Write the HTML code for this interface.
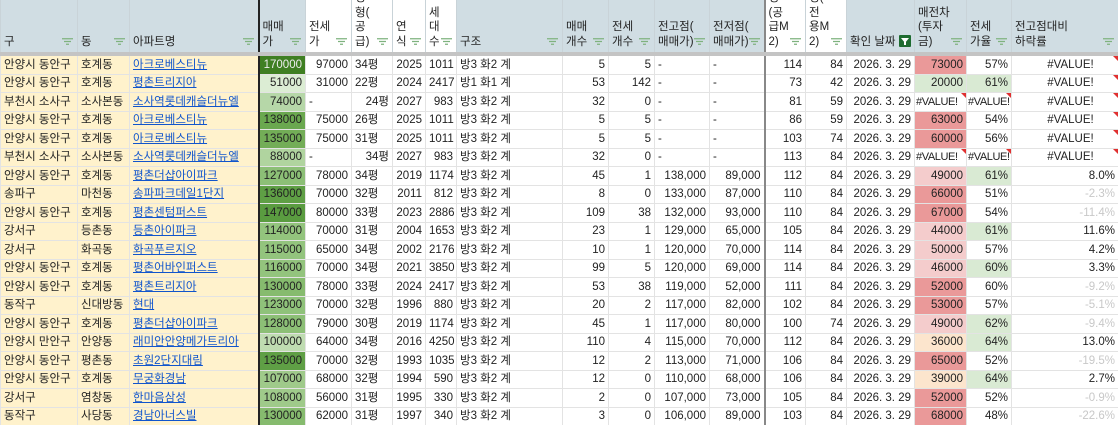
<!DOCTYPE html>
<html><head><meta charset="utf-8">
<style>
html,body{margin:0;padding:0;background:#fff;width:1118px;height:425px;overflow:hidden}
table{border-collapse:collapse;table-layout:fixed;width:1118px;font-family:"Liberation Sans","Noto Sans CJK KR",sans-serif;font-size:11.5px;color:#222}
td{border:1px solid #e3e3e3;height:17.5px;padding:0 3px;white-space:nowrap;overflow:hidden;line-height:16px;position:relative}
thead td{height:auto;vertical-align:bottom;background:#d0dde3;border-bottom:4px solid #c4c4c4;line-height:14.5px;padding:0 3px;white-space:normal;border-color:#c9d3d8;border-bottom-color:#c4c4c4;border-top:0}
thead td>div{height:52px;overflow:hidden;display:flex;flex-direction:column;justify-content:flex-end;padding-bottom:3px;box-sizing:border-box}
thead td.w{background:#fff}
thead td svg{position:absolute;right:4px;bottom:7px}
.y{background:#fff2cc}
.r{text-align:right}
.c{text-align:center;padding-left:14px}
a{color:#1155cc;text-decoration:underline}
.L{border-left:2px solid #222}
.M{border-left:2px solid #888}
.g1{background:#d9ead3}
.p1{background:#ea9999}.p2{background:#f4cccc}.o{background:#fce5cd}
.n{color:#c8c8c8}
.v{font-size:11px;letter-spacing:-0.4px;padding:0 1px}
.t:after{content:"";position:absolute;right:0;top:0;border-top:5px solid #e03030;border-left:5px solid transparent}
.f{position:absolute;right:3px;bottom:5px;width:12px;height:12px;background:#1e6b30;border-radius:1px}
.f:after{content:"";position:absolute;left:2px;top:3px;border-top:5px solid #fff;border-left:4px solid transparent;border-right:4px solid transparent}
.f:before{content:"";position:absolute;left:5px;top:7px;width:2px;height:3px;background:#fff}
</style></head><body>
<svg width="0" height="0" style="position:absolute"><defs><g id="fi"><path d="M0 0.75H11M2 3.5H9M4 6.25H7" stroke="#7fb27f" stroke-width="1.3"/></g></defs></svg>
<table>
<colgroup><col style="width:77px"><col style="width:52px"><col style="width:129px"><col style="width:47px"><col style="width:46px"><col style="width:41px"><col style="width:33px"><col style="width:31px"><col style="width:106px"><col style="width:46px"><col style="width:46px"><col style="width:55px"><col style="width:55px"><col style="width:41px"><col style="width:41px"><col style="width:68px"><col style="width:52px"><col style="width:45px"><col style="width:107px"></colgroup>
<thead><tr>
<td><div>구</div><svg width="11" height="7"><use href="#fi"/></svg></td>
<td><div>동</div><svg width="11" height="7"><use href="#fi"/></svg></td>
<td><div>아파트명</div><svg width="11" height="7"><use href="#fi"/></svg></td>
<td class="L"><div>매매<br>가</div><svg width="11" height="7"><use href="#fi"/></svg></td>
<td class="w"><div>전세<br>가</div><svg width="11" height="7"><use href="#fi"/></svg></td>
<td class="w"><div>평<br>형(<br>공<br>급)</div><svg width="11" height="7"><use href="#fi"/></svg></td>
<td class="w"><div>연<br>식</div><svg width="11" height="7"><use href="#fi"/></svg></td>
<td class="w"><div>세<br>대<br>수</div><svg width="11" height="7"><use href="#fi"/></svg></td>
<td><div>구조</div><svg width="11" height="7"><use href="#fi"/></svg></td>
<td><div>매매<br>개수</div><svg width="11" height="7"><use href="#fi"/></svg></td>
<td><div>전세<br>개수</div><svg width="11" height="7"><use href="#fi"/></svg></td>
<td><div>전고점(<br>매매가)</div><svg width="11" height="7"><use href="#fi"/></svg></td>
<td><div>전저점(<br>매매가)</div><svg width="11" height="7"><use href="#fi"/></svg></td>
<td class="w M"><div>평<br>(공<br>급M<br>2)</div><svg width="11" height="7"><use href="#fi"/></svg></td>
<td class="w"><div>평(<br>전<br>용M<br>2)</div><svg width="11" height="7"><use href="#fi"/></svg></td>
<td><div>확인 날짜</div><span class="f"></span></td>
<td><div>매전차<br>(투자<br>금)</div><svg width="11" height="7"><use href="#fi"/></svg></td>
<td><div>전세<br>가율</div><svg width="11" height="7"><use href="#fi"/></svg></td>
<td><div>전고점대비<br>하락률</div><svg width="11" height="7"><use href="#fi"/></svg></td>
</tr></thead>
<tbody>
<tr><td class="y">안양시 동안구</td><td class="y">호계동</td><td class="y"><a>아크로베스티뉴</a></td><td class="r L" style="background:#3f7f22;color:#eee">170000</td><td class="r">97000</td><td>34평</td><td class="r">2025</td><td class="r">1011</td><td>방3 화2 계</td><td class="r">5</td><td class="r">5</td><td>-</td><td>-</td><td class="r M">114</td><td class="r">84</td><td class="r">2026. 3. 29</td><td class="r p1">73000</td><td class="r">57%</td><td class="c t">#VALUE!</td></tr>
<tr><td class="y">안양시 동안구</td><td class="y">호계동</td><td class="y"><a>평촌트리지아</a></td><td class="r L" style="background:#dcedd4">51000</td><td class="r">31000</td><td>22평</td><td class="r">2024</td><td class="r">2417</td><td>방1 화1 계</td><td class="r">53</td><td class="r">142</td><td>-</td><td>-</td><td class="r M">73</td><td class="r">42</td><td class="r">2026. 3. 29</td><td class="r g1">20000</td><td class="r g1">61%</td><td class="c t">#VALUE!</td></tr>
<tr><td class="y">부천시 소사구</td><td class="y">소사본동</td><td class="y"><a>소사역롯데캐슬더뉴엘</a></td><td class="r L" style="background:#b6d7a8">74000</td><td>-</td><td class="r">24평</td><td class="r">2027</td><td class="r">983</td><td>방3 화2 계</td><td class="r">32</td><td class="r">0</td><td>-</td><td>-</td><td class="r M">81</td><td class="r">59</td><td class="r">2026. 3. 29</td><td class="t v">#VALUE!</td><td class="t v">#VALUE!</td><td class="c t">#VALUE!</td></tr>
<tr><td class="y">안양시 동안구</td><td class="y">호계동</td><td class="y"><a>아크로베스티뉴</a></td><td class="r L" style="background:#6aa84f">138000</td><td class="r">75000</td><td>26평</td><td class="r">2025</td><td class="r">1011</td><td>방3 화2 계</td><td class="r">5</td><td class="r">5</td><td>-</td><td>-</td><td class="r M">86</td><td class="r">59</td><td class="r">2026. 3. 29</td><td class="r p1">63000</td><td class="r">54%</td><td class="c t">#VALUE!</td></tr>
<tr><td class="y">안양시 동안구</td><td class="y">호계동</td><td class="y"><a>아크로베스티뉴</a></td><td class="r L" style="background:#73ad57">135000</td><td class="r">75000</td><td>31평</td><td class="r">2025</td><td class="r">1011</td><td>방3 화2 계</td><td class="r">5</td><td class="r">5</td><td>-</td><td>-</td><td class="r M">103</td><td class="r">74</td><td class="r">2026. 3. 29</td><td class="r p1">60000</td><td class="r">56%</td><td class="c t">#VALUE!</td></tr>
<tr><td class="y">부천시 소사구</td><td class="y">소사본동</td><td class="y"><a>소사역롯데캐슬더뉴엘</a></td><td class="r L" style="background:#b0d49f">88000</td><td>-</td><td class="r">34평</td><td class="r">2027</td><td class="r">983</td><td>방3 화2 계</td><td class="r">32</td><td class="r">0</td><td>-</td><td>-</td><td class="r M">113</td><td class="r">84</td><td class="r">2026. 3. 29</td><td class="t v">#VALUE!</td><td class="t v">#VALUE!</td><td class="c t">#VALUE!</td></tr>
<tr><td class="y">안양시 동안구</td><td class="y">호계동</td><td class="y"><a>평촌더샵아이파크</a></td><td class="r L" style="background:#8cbf76">127000</td><td class="r">78000</td><td>34평</td><td class="r">2019</td><td class="r">1174</td><td>방3 화2 계</td><td class="r">45</td><td class="r">1</td><td class="r">138,000</td><td class="r">89,000</td><td class="r M">112</td><td class="r">84</td><td class="r">2026. 3. 29</td><td class="r p2">49000</td><td class="r g1">61%</td><td class="r">8.0%</td></tr>
<tr><td class="y">송파구</td><td class="y">마천동</td><td class="y"><a>송파파크데일1단지</a></td><td class="r L" style="background:#5f9f45">136000</td><td class="r">70000</td><td>32평</td><td class="r">2011</td><td class="r">812</td><td>방3 화2 계</td><td class="r">8</td><td class="r">0</td><td class="r">133,000</td><td class="r">87,000</td><td class="r M">110</td><td class="r">84</td><td class="r">2026. 3. 29</td><td class="r p1">66000</td><td class="r">51%</td><td class="r n">-2.3%</td></tr>
<tr><td class="y">안양시 동안구</td><td class="y">호계동</td><td class="y"><a>평촌센텀퍼스트</a></td><td class="r L" style="background:#5a9c40">147000</td><td class="r">80000</td><td>33평</td><td class="r">2023</td><td class="r">2886</td><td>방3 화2 계</td><td class="r">109</td><td class="r">38</td><td class="r">132,000</td><td class="r">93,000</td><td class="r M">110</td><td class="r">84</td><td class="r">2026. 3. 29</td><td class="r p1">67000</td><td class="r">54%</td><td class="r n">-11.4%</td></tr>
<tr><td class="y">강서구</td><td class="y">등촌동</td><td class="y"><a>등촌아이파크</a></td><td class="r L" style="background:#93c47d">114000</td><td class="r">70000</td><td>31평</td><td class="r">2004</td><td class="r">1653</td><td>방3 화2 계</td><td class="r">23</td><td class="r">1</td><td class="r">129,000</td><td class="r">65,000</td><td class="r M">105</td><td class="r">84</td><td class="r">2026. 3. 29</td><td class="r p2">44000</td><td class="r g1">61%</td><td class="r">11.6%</td></tr>
<tr><td class="y">강서구</td><td class="y">화곡동</td><td class="y"><a>화곡푸르지오</a></td><td class="r L" style="background:#93c47d">115000</td><td class="r">65000</td><td>34평</td><td class="r">2002</td><td class="r">2176</td><td>방3 화2 계</td><td class="r">10</td><td class="r">1</td><td class="r">120,000</td><td class="r">70,000</td><td class="r M">114</td><td class="r">84</td><td class="r">2026. 3. 29</td><td class="r p2">50000</td><td class="r">57%</td><td class="r">4.2%</td></tr>
<tr><td class="y">안양시 동안구</td><td class="y">호계동</td><td class="y"><a>평촌어바인퍼스트</a></td><td class="r L" style="background:#93c47d">116000</td><td class="r">70000</td><td>34평</td><td class="r">2021</td><td class="r">3850</td><td>방3 화2 계</td><td class="r">99</td><td class="r">5</td><td class="r">120,000</td><td class="r">69,000</td><td class="r M">114</td><td class="r">84</td><td class="r">2026. 3. 29</td><td class="r p2">46000</td><td class="r g1">60%</td><td class="r">3.3%</td></tr>
<tr><td class="y">안양시 동안구</td><td class="y">호계동</td><td class="y"><a>평촌트리지아</a></td><td class="r L" style="background:#86bb6e">130000</td><td class="r">78000</td><td>33평</td><td class="r">2024</td><td class="r">2417</td><td>방3 화2 계</td><td class="r">53</td><td class="r">38</td><td class="r">119,000</td><td class="r">52,000</td><td class="r M">111</td><td class="r">84</td><td class="r">2026. 3. 29</td><td class="r p1">52000</td><td class="r">60%</td><td class="r n">-9.2%</td></tr>
<tr><td class="y">동작구</td><td class="y">신대방동</td><td class="y"><a>현대</a></td><td class="r L" style="background:#8fc27a">123000</td><td class="r">70000</td><td>32평</td><td class="r">1996</td><td class="r">880</td><td>방3 화2 계</td><td class="r">20</td><td class="r">2</td><td class="r">117,000</td><td class="r">82,000</td><td class="r M">102</td><td class="r">84</td><td class="r">2026. 3. 29</td><td class="r p1">53000</td><td class="r">57%</td><td class="r n">-5.1%</td></tr>
<tr><td class="y">안양시 동안구</td><td class="y">호계동</td><td class="y"><a>평촌더샵아이파크</a></td><td class="r L" style="background:#8cbf76">128000</td><td class="r">79000</td><td>30평</td><td class="r">2019</td><td class="r">1174</td><td>방3 화2 계</td><td class="r">45</td><td class="r">1</td><td class="r">117,000</td><td class="r">80,000</td><td class="r M">100</td><td class="r">74</td><td class="r">2026. 3. 29</td><td class="r p2">49000</td><td class="r g1">62%</td><td class="r n">-9.4%</td></tr>
<tr><td class="y">안양시 만안구</td><td class="y">안양동</td><td class="y"><a>래미안안양메가트리아</a></td><td class="r L" style="background:#bfdcb1">100000</td><td class="r">64000</td><td>34평</td><td class="r">2016</td><td class="r">4250</td><td>방3 화2 계</td><td class="r">110</td><td class="r">4</td><td class="r">115,000</td><td class="r">70,000</td><td class="r M">112</td><td class="r">84</td><td class="r">2026. 3. 29</td><td class="r o">36000</td><td class="r g1">64%</td><td class="r">13.0%</td></tr>
<tr><td class="y">안양시 동안구</td><td class="y">평촌동</td><td class="y"><a>초원2단지대림</a></td><td class="r L" style="background:#5f9f45">135000</td><td class="r">70000</td><td>32평</td><td class="r">1993</td><td class="r">1035</td><td>방3 화2 계</td><td class="r">12</td><td class="r">2</td><td class="r">113,000</td><td class="r">71,000</td><td class="r M">106</td><td class="r">84</td><td class="r">2026. 3. 29</td><td class="r p1">65000</td><td class="r">52%</td><td class="r n">-19.5%</td></tr>
<tr><td class="y">안양시 동안구</td><td class="y">호계동</td><td class="y"><a>무궁화경남</a></td><td class="r L" style="background:#9fca8a">107000</td><td class="r">68000</td><td>32평</td><td class="r">1994</td><td class="r">590</td><td>방3 화2 계</td><td class="r">12</td><td class="r">0</td><td class="r">110,000</td><td class="r">68,000</td><td class="r M">106</td><td class="r">84</td><td class="r">2026. 3. 29</td><td class="r o">39000</td><td class="r g1">64%</td><td class="r">2.7%</td></tr>
<tr><td class="y">강서구</td><td class="y">염창동</td><td class="y"><a>한마음삼성</a></td><td class="r L" style="background:#9fca8a">108000</td><td class="r">56000</td><td>31평</td><td class="r">1995</td><td class="r">330</td><td>방3 화2 계</td><td class="r">2</td><td class="r">0</td><td class="r">107,000</td><td class="r">73,000</td><td class="r M">105</td><td class="r">84</td><td class="r">2026. 3. 29</td><td class="r p1">52000</td><td class="r">52%</td><td class="r n">-0.9%</td></tr>
<tr><td class="y">동작구</td><td class="y">사당동</td><td class="y"><a>경남아너스빌</a></td><td class="r L" style="background:#86bb6e">130000</td><td class="r">62000</td><td>31평</td><td class="r">1997</td><td class="r">340</td><td>방3 화2 계</td><td class="r">3</td><td class="r">0</td><td class="r">106,000</td><td class="r">89,000</td><td class="r M">103</td><td class="r">84</td><td class="r">2026. 3. 29</td><td class="r p1">68000</td><td class="r">48%</td><td class="r n">-22.6%</td></tr>
</tbody></table>
</body></html>
